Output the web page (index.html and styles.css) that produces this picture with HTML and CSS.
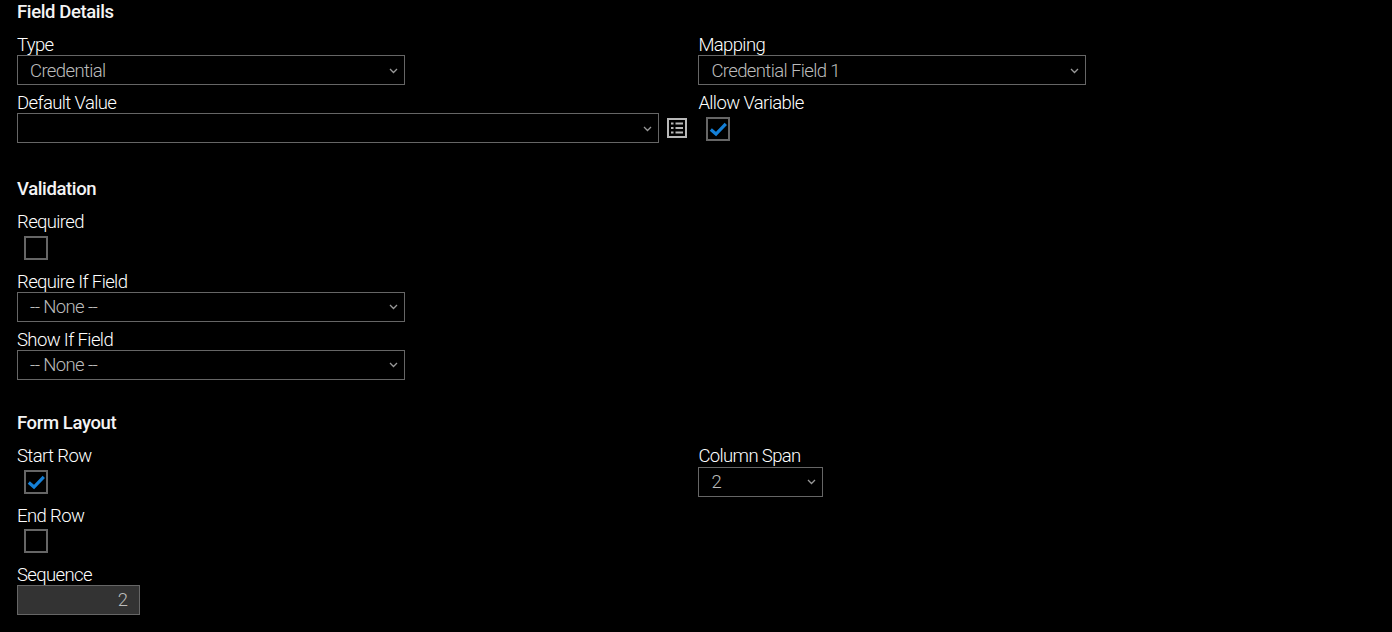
FILE: index.html
```html
<!DOCTYPE html>
<html lang="en">
<head>
<meta charset="utf-8">
<title>Field Details</title>
<link rel="stylesheet" href="styles.css">
</head>
<body>
<main class="page">
  <h2 class="heading heading-first">Field Details</h2>
  <div class="columns">
    <div class="field"><label class="label">Type</label>
      <div class="select w-388"><span>Credential</span><svg class="chev" viewBox="0 0 9 6"><path d="M1 1l3.500 3.500L8 1"/></svg></div></div>
    <div class="field"><label class="label">Mapping</label>
      <div class="select w-388"><span>Credential Field 1</span><svg class="chev" viewBox="0 0 9 6"><path d="M1 1l3.500 3.500L8 1"/></svg></div></div>
    <div class="field"><label class="label">Default Value</label>
      <div class="with-icon">
        <div class="select w-642"><span></span><svg class="chev" viewBox="0 0 9 6"><path d="M1 1l3.500 3.500L8 1"/></svg></div>
        <svg class="list-icon" viewBox="0 0 20 20"><rect x="1" y="1" width="18" height="18"/><path d="M4 5.500h2.500M8.500 5.500H16M4 10h2.500M8.500 10H16M4 14.500h2.500M8.500 14.500H16"/></svg>
      </div></div>
    <div class="field"><label class="label">Allow Variable</label>
      <div class="check check-right"><svg viewBox="0 0 20 20"><path d="M2.800 10.500l5.200 4.500L17.800 4.800"/></svg></div></div>
  </div>

  <h2 class="heading heading-validation">Validation</h2>
  <div class="field"><label class="label">Required</label><div class="check"></div></div>
  <div class="field"><label class="label">Require If Field</label>
    <div class="select w-388"><span>-- None --</span><svg class="chev" viewBox="0 0 9 6"><path d="M1 1l3.500 3.500L8 1"/></svg></div></div>
  <div class="field"><label class="label">Show If Field</label>
    <div class="select w-388"><span>-- None --</span><svg class="chev" viewBox="0 0 9 6"><path d="M1 1l3.500 3.500L8 1"/></svg></div></div>

  <h2 class="heading heading-layout">Form Layout</h2>
  <div class="columns">
    <div class="field"><label class="label">Start Row</label>
      <div class="check"><svg viewBox="0 0 20 20"><path d="M2.800 10.500l5.200 4.500L17.800 4.800"/></svg></div></div>
    <div class="field"><label class="label">Column Span</label>
      <div class="select w-125 select-nudge"><span>2</span><svg class="chev" viewBox="0 0 9 6"><path d="M1 1l3.500 3.500L8 1"/></svg></div></div>
  </div>
  <div class="field"><label class="label">End Row</label><div class="check"></div></div>
  <div class="field"><label class="label">Sequence</label><div class="number">2</div></div>
</main>
</body>
</html>
```
FILE: styles.css
```css
* { box-sizing: border-box; }
html, body { margin: 0; height: 100%; background: #000; }
body { overflow: hidden; font-family: Roboto, "Liberation Sans", sans-serif; color: #fff; }
.page { padding: 0 17px; width: 1392px; }
.heading { margin: 0; height: 22px; font-size: 18.5px; font-weight: 500; line-height: 24px; letter-spacing: -0.38px; color: #f4f4f4; }
.heading-first { margin-bottom: 11px; }
.heading-validation { margin-top: 26.67px; margin-bottom: 11.33px; }
.heading-layout { margin-top: 25.67px; margin-bottom: 11px; }
.columns { display: grid; grid-template-columns: 681.4px 1fr; }
.field { padding-bottom: 6px; }
.label { display: block; height: 22px; font-size: 18.5px; font-weight: 300; line-height: 24px; letter-spacing: -0.62px; color: #fff; }
.select { display: flex; align-items: center; justify-content: space-between; height: 30px; padding: 1px 6px 0 12px; border: 1px solid #666; font-size: 18.5px; font-weight: 300; letter-spacing: -0.62px; color: #bcbcbc; background: #000; }
.select-nudge { margin-top: 0.5px; }
.w-388 { width: 388px; }
.w-642 { width: 642px; }
.w-125 { width: 125px; }
.chev { width: 9px; height: 6px; fill: none; stroke: #999; stroke-width: 1.3; }
.with-icon { display: flex; align-items: center; gap: 8px; }
.list-icon { width: 20px; height: 20px; fill: none; stroke: #b8b8b8; stroke-width: 2; }
.check { width: 24px; height: 24px; margin: 3.500px 0 3.830px 7px; border: 2px solid #666; }
.check-right { margin-left: 8px; }
.check svg { display: block; width: 20px; height: 20px; fill: none; stroke: #1480d8; stroke-width: 3.2; }
.number { width: 123px; height: 30px; padding-right: 11px; border: 1px solid #666; background: #333; text-align: right; font-size: 18.5px; font-weight: 300; line-height: 29px; color: #bcbcbc; }
```
